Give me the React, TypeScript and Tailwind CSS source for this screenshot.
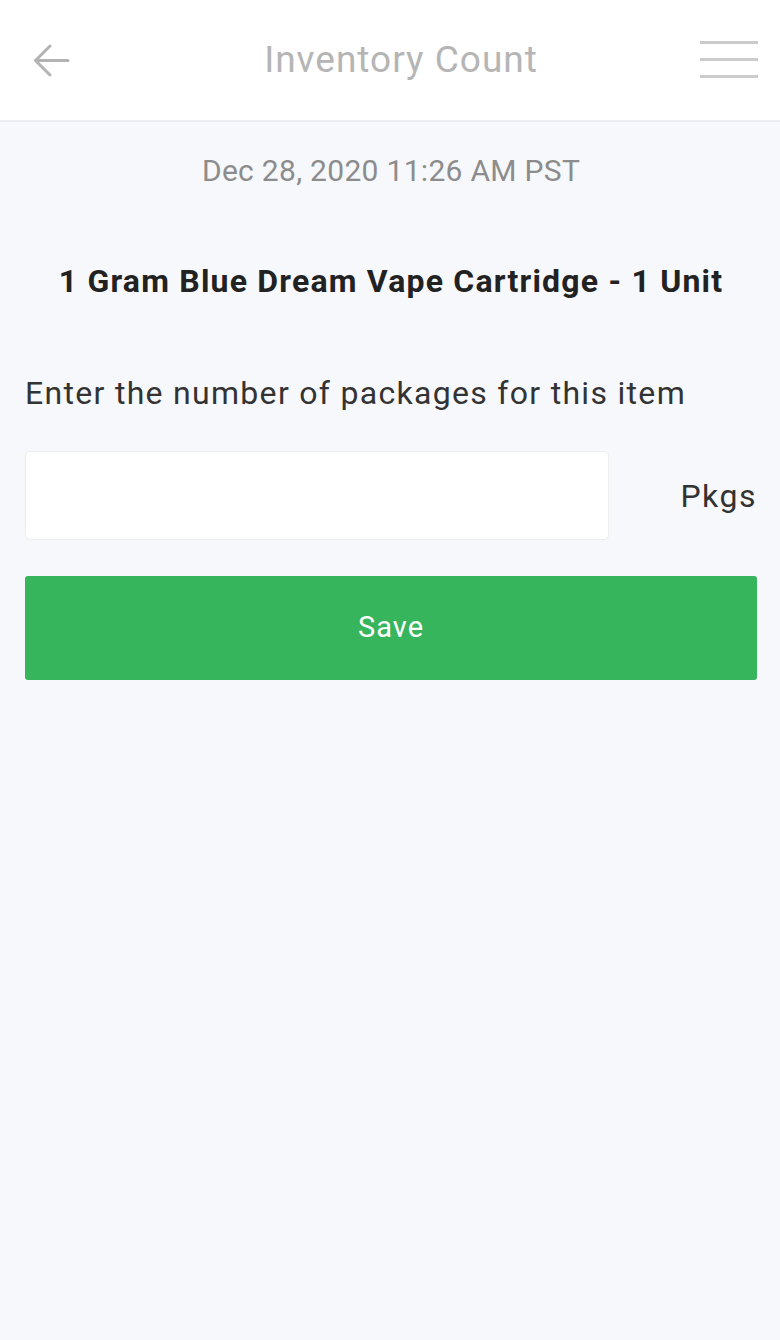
export default function App() {
  return (
    <div
      className="min-h-[1340px] w-[780px] bg-[#f7f8fc]"
      style={{ fontFamily: 'Roboto, "Liberation Sans", sans-serif' }}
    >
      <header className="flex h-[122px] items-center justify-between border-b-2 border-[#ebedf2] bg-white pl-[33px] pr-[22px]">
        <svg width="37" height="33" viewBox="0 0 37 33" fill="none" stroke="#b3b3b3" strokeWidth="3" strokeLinecap="round" strokeLinejoin="round">
          <path d="M35 16.5H3" />
          <path d="M17 2L2.5 16.5L17 31" />
        </svg>
        <div className="pl-[32px] text-[37px] leading-[44px] tracking-[1px] text-[#b5b5b5]">Inventory Count</div>
        <svg width="58" height="40" viewBox="0 0 58 40" fill="none" stroke="#cbcbcb" strokeWidth="3">
          <path d="M0 2.5H58" />
          <path d="M0 19.5H58" />
          <path d="M0 36.5H58" />
        </svg>
      </header>
      <div className="flex flex-col pl-[25px] pr-[23px]">
        <div className="mt-[31px] text-center text-[30px] leading-[36px] tracking-[0.3px] text-[#8c8c8c]">
          Dec 28, 2020 11:26 AM PST
        </div>
        <div className="mt-[72px] text-center text-[32px] font-bold leading-[40px] tracking-[1.2px] text-[#222222]">
          1 Gram Blue Dream Vape Cartridge - 1 Unit
        </div>
        <div className="mt-[72px] text-[32px] leading-[40px] tracking-[1.3px] text-[#333333]">
          Enter the number of packages for this item
        </div>
        <div className="mt-[38px] flex items-center justify-between">
          <div className="h-[89px] w-[584px] rounded-[5px] border border-[#eeeeee] bg-white" />
          <div className="text-[32px] leading-[40px] tracking-[1.5px] text-[#333333]">Pkgs</div>
        </div>
        <button className="mt-[36px] flex h-[104px] w-full items-center justify-center rounded-[3px] bg-[#36b55c] text-[29px] tracking-[1px] text-white">
          Save
        </button>
      </div>
    </div>
  );
}
